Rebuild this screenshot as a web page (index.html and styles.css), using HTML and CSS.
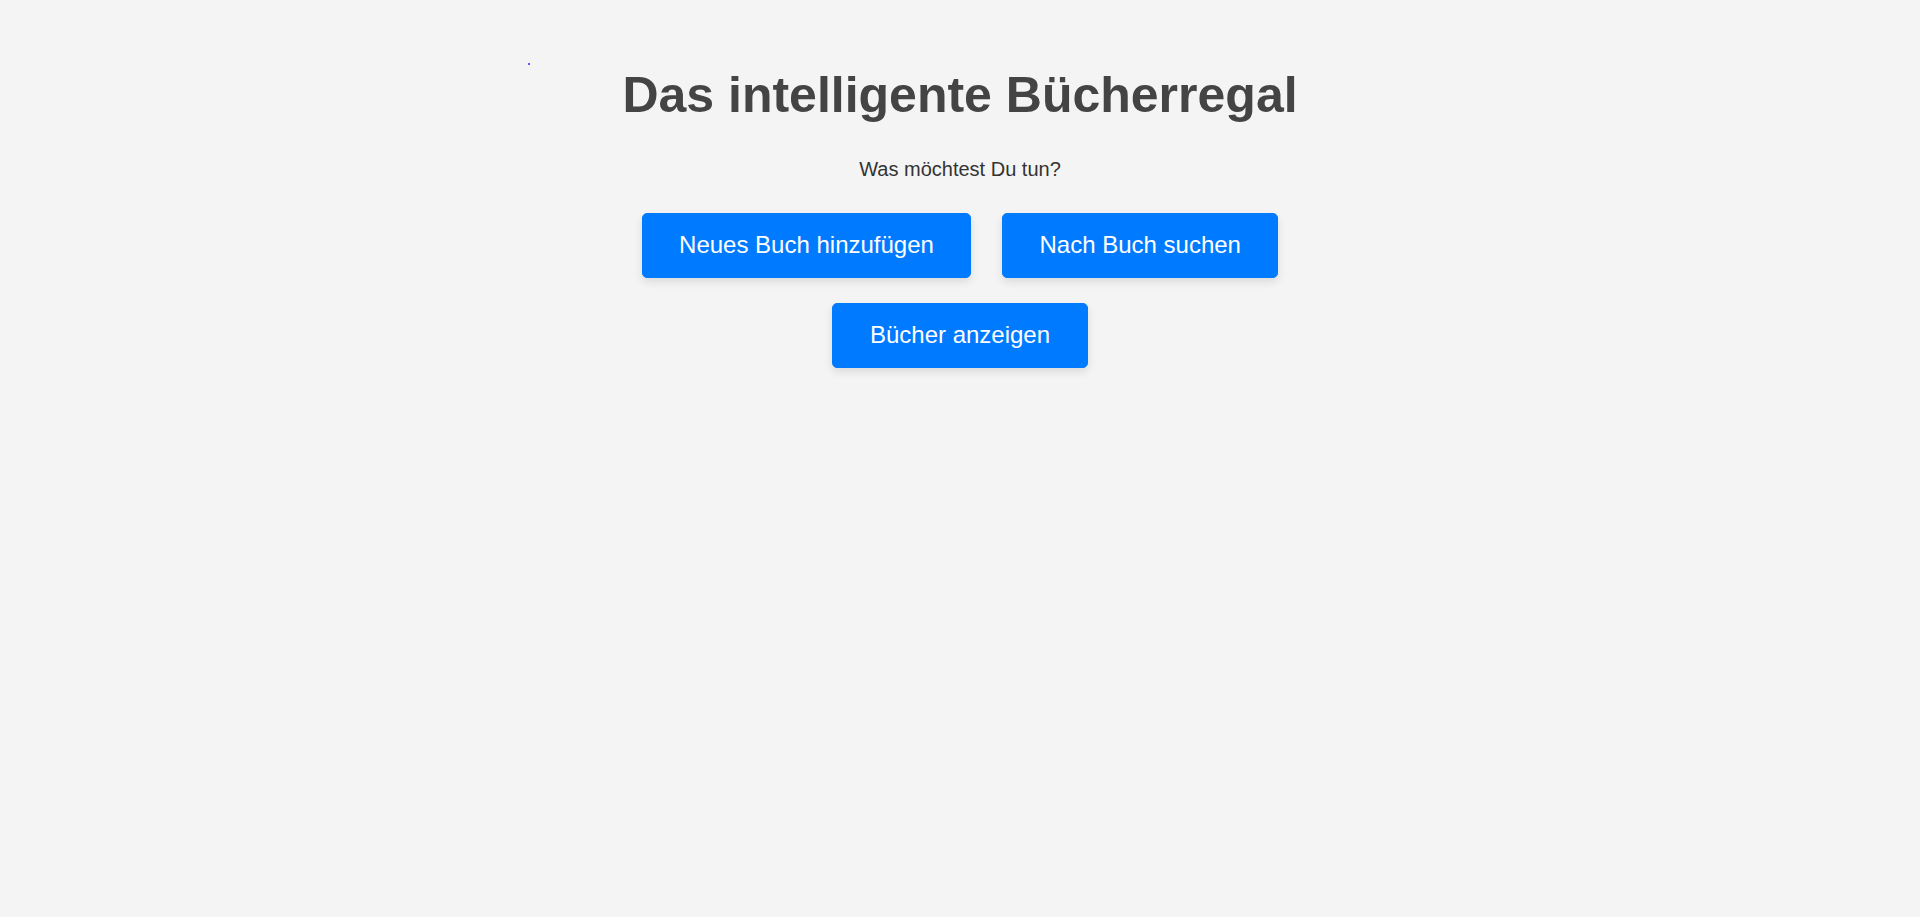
FILE: index.html
```html
<!DOCTYPE html>
<html lang="de">
  <head>
    <meta charset="UTF-8" />
    <meta name="viewport" content="width=device-width, initial-scale=1.0" />
    <title>Das intelligente Bücherregal</title>
    <link rel="stylesheet" href="styles.css">
  </head>
  <body>
    <span class="dot"></span>
    <div class="container">
      <h1>Das intelligente Bücherregal</h1>
      <p>Was möchtest Du tun?</p>
      <div class="menu">
        <button>Neues Buch hinzufügen</button>
        <button>Nach Buch suchen</button>
        <button>Bücher anzeigen</button>
      </div>
    </div>
  </body>
</html>
```

FILE: styles.css
```css
body {
  margin: 0;
  padding-top: 32px;
  background-color: #f4f4f4;
  font-family: "Liberation Sans", Arial, sans-serif;
  font-size: 20px;
  color: #333;
}
.dot {
  position: absolute;
  left: 528px;
  top: 63px;
  width: 2px;
  height: 2px;
  background: #2a2aff;
  border-radius: 50%;
}
.container {
  max-width: 800px;
  margin: 0 auto;
  text-align: center;
}
h1 {
  font-size: 50px;
  margin: 33.5px 0 34.5px;
  color: #444;
}
p {
  margin: 20px 0 19px;
}
.menu button {
  display: inline-block;
  margin: 12.5px;
  padding: 17.5px 36.5px;
  font-family: "Liberation Sans", Arial, sans-serif;
  font-size: 24px;
  color: white;
  background-color: #007bff;
  border: 1px solid #007bff;
  border-radius: 5px;
  box-shadow: 0 4px 8px rgba(0, 0, 0, 0.1);
  cursor: pointer;
}
```
